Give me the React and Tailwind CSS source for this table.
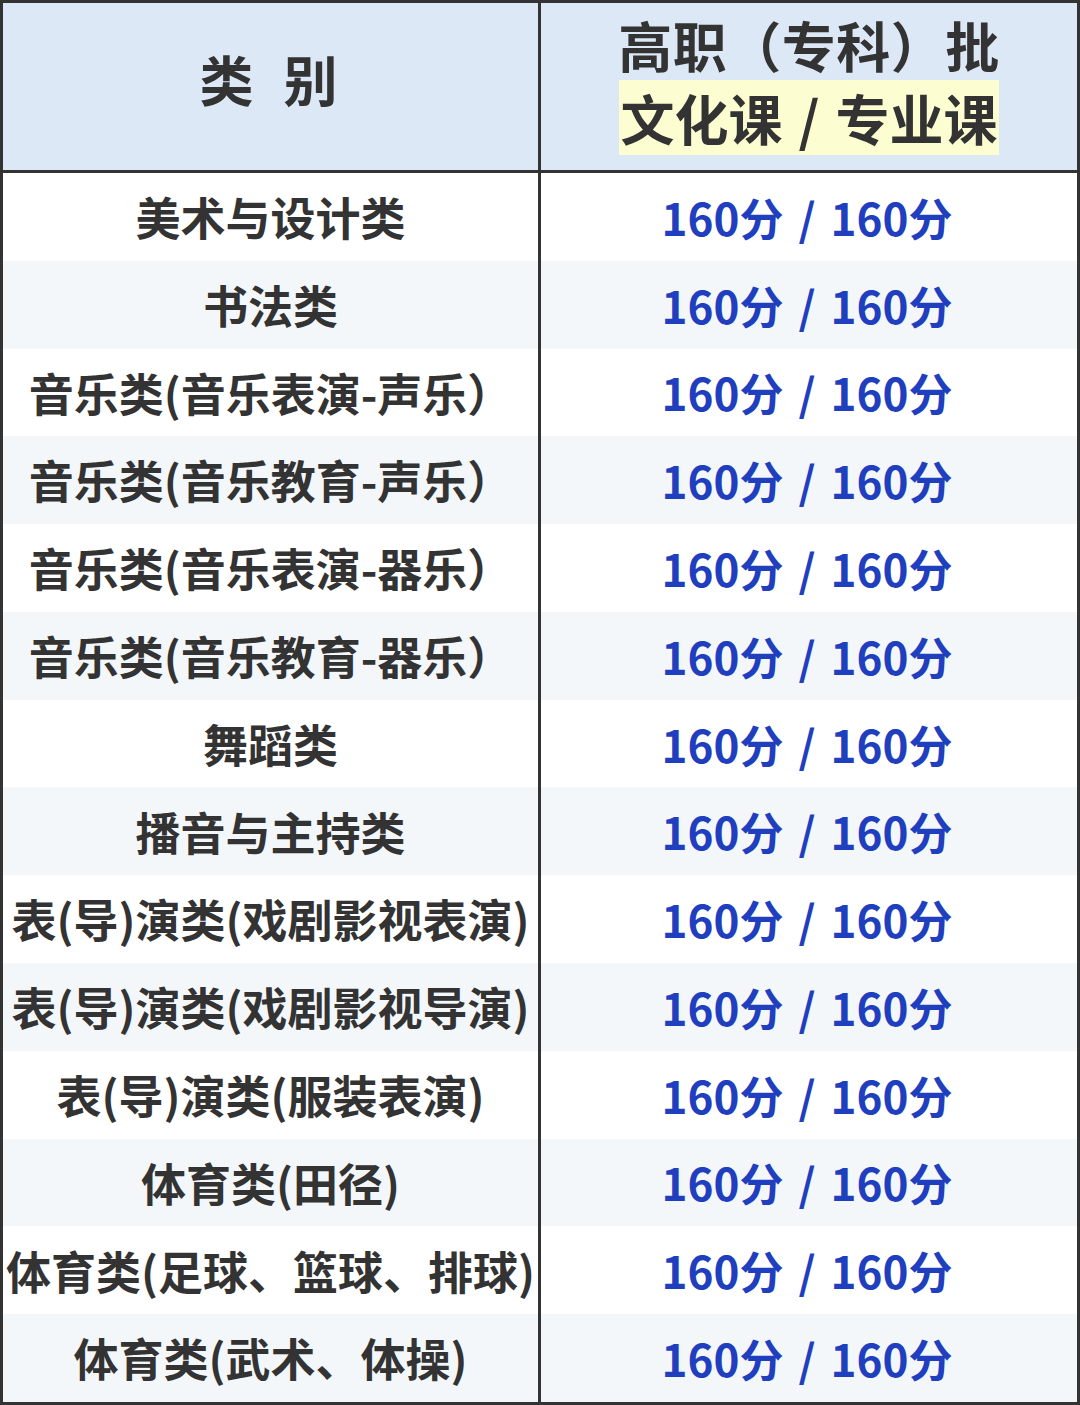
const rows = [
  "美术与设计类",
  "书法类",
  "音乐类(音乐表演-声乐）",
  "音乐类(音乐教育-声乐）",
  "音乐类(音乐表演-器乐）",
  "音乐类(音乐教育-器乐）",
  "舞蹈类",
  "播音与主持类",
  "表(导)演类(戏剧影视表演)",
  "表(导)演类(戏剧影视导演)",
  "表(导)演类(服装表演)",
  "体育类(田径)",
  "体育类(足球、篮球、排球)",
  "体育类(武术、体操)",
]

export default function App() {
  return (
    <div
      className="w-[1080px] h-[1405px] flex flex-col border-[3px] border-[#333] bg-white text-[#333] font-bold"
      style={{ fontFamily: '"Noto Sans CJK SC", "Noto Sans", sans-serif' }}
    >
      <div className="h-[170px] shrink-0 flex bg-[#dde8f6] border-b-[3px] border-[#333]">
        <div className="w-[538px] flex items-center justify-center gap-[30px] border-r-[3px] border-[#333] text-[54px] pb-[16px] pr-[4px]">
          <span>类</span>
          <span>别</span>
        </div>
        <div className="flex-1 flex flex-col items-center justify-center text-[54px] pb-[8px]">
          <div className="leading-[70px] tracking-[0.5px]">高职（专科）批</div>
          <div className="bg-[#fdfdd2] px-[2px] leading-[75px]">
            文化课<span className="mx-[16px]">/</span>专业课
          </div>
        </div>
      </div>
      {rows.map((name, i) => (
        <div key={i} className={`flex-1 flex ${i % 2 === 1 ? "bg-[#f4f7fa]" : "bg-white"}`}>
          <div className="w-[538px] flex items-center justify-center border-r-[3px] border-[#333] text-[45px] whitespace-nowrap">
            {name}
          </div>
          <div className="flex-1 flex items-center justify-center text-[44px] text-[#1f3fbf] pr-[4px]">
            160分<span className="mx-[15px]">/</span>160分
          </div>
        </div>
      ))}
    </div>
  )
}
